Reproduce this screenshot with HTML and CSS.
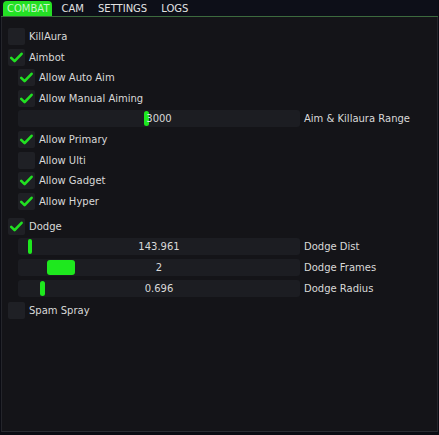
FILE: index.html
```html
<!DOCTYPE html>
<html>
<head>
<meta charset="utf-8">
<link rel="stylesheet" href="styles.css">
</head>
<body>
<div class="window">
  <div class="tabbar">
    <div class="tab active">COMBAT</div>
    <div class="tab">CAM</div>
    <div class="tab">SETTINGS</div>
    <div class="tab">LOGS</div>
  </div>
  <div class="content">
    <div class="row"><span class="box"></span><span class="label">KillAura</span></div>
    <div class="row"><span class="box on"><svg viewBox="0 0 17 17"><path d="M3.2 8.8 L6.6 12.2 L13.6 4.8"/></svg></span><span class="label">Aimbot</span></div>
    <div class="row indent"><span class="box on"><svg viewBox="0 0 17 17"><path d="M3.2 8.8 L6.6 12.2 L13.6 4.8"/></svg></span><span class="label">Allow Auto Aim</span></div>
    <div class="row indent"><span class="box on"><svg viewBox="0 0 17 17"><path d="M3.2 8.8 L6.6 12.2 L13.6 4.8"/></svg></span><span class="label">Allow Manual Aiming</span></div>
    <div class="row indent">
      <div class="slider"><span class="grab" style="left:126px;width:5px"></span><span class="value">3000</span></div>
      <span class="label">Aim &amp; Killaura Range</span>
    </div>
    <div class="row indent"><span class="box on"><svg viewBox="0 0 17 17"><path d="M3.2 8.8 L6.6 12.2 L13.6 4.8"/></svg></span><span class="label">Allow Primary</span></div>
    <div class="row indent"><span class="box"></span><span class="label">Allow Ulti</span></div>
    <div class="row indent"><span class="box on"><svg viewBox="0 0 17 17"><path d="M3.2 8.8 L6.6 12.2 L13.6 4.8"/></svg></span><span class="label">Allow Gadget</span></div>
    <div class="row indent"><span class="box on"><svg viewBox="0 0 17 17"><path d="M3.2 8.8 L6.6 12.2 L13.6 4.8"/></svg></span><span class="label">Allow Hyper</span></div>
    <div class="row gap-before"><span class="box on"><svg viewBox="0 0 17 17"><path d="M3.2 8.8 L6.6 12.2 L13.6 4.8"/></svg></span><span class="label">Dodge</span></div>
    <div class="row indent">
      <div class="slider"><span class="grab" style="left:10px;width:4px"></span><span class="value">143.961</span></div>
      <span class="label">Dodge Dist</span>
    </div>
    <div class="row indent">
      <div class="slider"><span class="grab" style="left:29px;width:28px"></span><span class="value">2</span></div>
      <span class="label">Dodge Frames</span>
    </div>
    <div class="row indent">
      <div class="slider"><span class="grab" style="left:22px;width:5px"></span><span class="value">0.696</span></div>
      <span class="label">Dodge Radius</span>
    </div>
    <div class="row gap-before2"><span class="box"></span><span class="label">Spam Spray</span></div>
  </div>
</div>
</body>
</html>
```
FILE: styles.css
```css
html, body {
  margin: 0;
  padding: 0;
  background: #0b0c13;
}
body {
  width: 439px;
  height: 435px;
  overflow: hidden;
  font-family: "DejaVu Sans", Verdana, sans-serif;
  font-size: 10px;
  color: #d9d9d9;
}
.window {
  box-sizing: border-box;
  width: 437px;
  height: 432px;
  margin-left: 1px;
  background: #141418;
  border-left: 1px solid #24252b;
  border-right: 1px solid #24252b;
  border-bottom: 1px solid #2a2b31;
}
.tabbar {
  height: 16px;
  background: #0d0f18;
  border-bottom: 1px solid #3c6a3e;
  display: flex;
  align-items: flex-end;
  padding-left: 1px;
  gap: 6px;
  margin-left: -1px;
  margin-right: -1px;
}
.tab {
  height: 15px;
  line-height: 15px;
  padding: 0 4px;
  color: #e2e2e2;
  border-radius: 4px 4px 0 0;
}
.tab.active {
  background: #24e024;
  color: #c9f5c9;
  padding: 0 2px 0 4px;
  margin-left: 1px;
}
.content {
  display: flex;
  flex-direction: column;
  gap: 3.6px;
  padding: 11px 0 0 6px;
}
.row {
  display: flex;
  align-items: center;
  gap: 4px;
  height: 17px;
}
.indent {
  margin-left: 10px;
}
.gap-before {
  margin-top: 4.4px;
}
.gap-before2 {
  margin-top: 1.5px;
}
.box {
  width: 17px;
  height: 17px;
  background: #1f2025;
  border-radius: 2px;
  flex: none;
}
.box svg {
  display: block;
  width: 17px;
  height: 17px;
}
.box svg path {
  fill: none;
  stroke: #22e022;
  stroke-width: 2.6;
  stroke-linecap: round;
  stroke-linejoin: round;
}
.label {
  white-space: nowrap;
}
.slider {
  position: relative;
  width: 282px;
  height: 17px;
  background: #1c1d22;
  border-radius: 3px;
  flex: none;
  display: flex;
  align-items: center;
  justify-content: center;
}
.grab {
  position: absolute;
  top: 1px;
  bottom: 1px;
  background: #1ee81e;
  border-radius: 3px;
}
.value {
  position: relative;
}
```
